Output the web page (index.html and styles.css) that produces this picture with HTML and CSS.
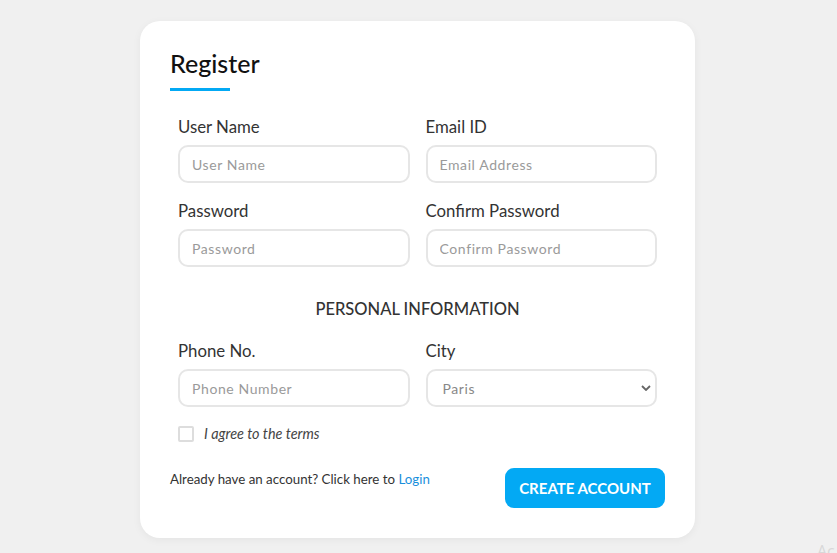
FILE: index.html
```html
<!DOCTYPE html>
<html>
<head>
<meta charset="utf-8">
<link rel="stylesheet" href="styles.css">
</head>
<body>
<div class="card">
  <h2 class="title">Register</h2>
  <div class="underline"></div>
  <div class="row first">
    <div class="col">
      <label class="label">User Name</label>
      <input class="field" type="text" placeholder="User Name">
    </div>
    <div class="col">
      <label class="label">Email ID</label>
      <input class="field" type="text" placeholder="Email Address">
    </div>
  </div>
  <div class="row">
    <div class="col">
      <label class="label">Password</label>
      <input class="field" type="password" placeholder="Password">
    </div>
    <div class="col">
      <label class="label">Confirm Password</label>
      <input class="field" type="password" placeholder="Confirm Password">
    </div>
  </div>
  <h3 class="section">PERSONAL INFORMATION</h3>
  <div class="row personal">
    <div class="col">
      <label class="label">Phone No.</label>
      <input class="field" type="text" placeholder="Phone Number">
    </div>
    <div class="col">
      <label class="label">City</label>
      <div class="select-wrap">
        <select class="field select">
          <option>Paris</option>
        </select>
        <svg class="chev" width="10" height="6" viewBox="0 0 10 6"><path d="M1 1 L5 5 L9 1" fill="none" stroke="#666" stroke-width="1.8"/></svg>
      </div>
    </div>
  </div>
  <div class="check">
    <span class="box"></span>
    <span class="check-text">I agree to the terms</span>
  </div>
  <div class="footer">
    <p class="login">Already have an account? Click here to <a class="link">Login</a></p>
    <button class="btn">CREATE ACCOUNT</button>
  </div>
</div>
<div class="watermark">Ac</div>
</body>
</html>
```
FILE: styles.css
```css
html, body { margin: 0; padding: 0; }
body {
  background: #f0f0f0;
  font-family: Lato, "Open Sans", sans-serif;
  color: #333;
  width: 837px;
  height: 553px;
  overflow: hidden;
  position: relative;
}
.card {
  box-sizing: border-box;
  width: 555px;
  margin: 21px 0 0 140px;
  padding: 26px 30px 30px;
  background: #fff;
  border-radius: 20px;
  box-shadow: 0 2px 8px rgba(0,0,0,0.05);
}
.title {
  margin: 0;
  font-size: 25px;
  line-height: 32px;
  font-weight: 500;
  color: #111;
}
.underline {
  width: 60px;
  height: 3px;
  background: #03a9f4;
  margin-top: 9px;
}
.row {
  display: flex;
  margin-top: 18px;
}
.row.first { margin-top: 26px; }
.row.personal { margin-top: 21px; }
.col {
  flex: 1;
  padding: 0 8px;
  display: flex;
  flex-direction: column;
}
.label {
  font-size: 16.8px;
  line-height: 20px;
  color: #333;
  margin-bottom: 8px;
}
.field {
  box-sizing: border-box;
  width: 100%;
  height: 38px;
  border: 2px solid #e6e6e6;
  border-radius: 10px;
  padding: 0 12px;
  font-family: Lato, "Open Sans", sans-serif;
  font-size: 14px;
  letter-spacing: 0.6px;
  color: #888;
  background: #fff;
  outline: none;
}
.field::placeholder { color: #9a9a9a; }
.select-wrap { position: relative; }
.select {
  appearance: none;
  -webkit-appearance: none;
  padding-left: 15px;
}
.chev {
  position: absolute;
  right: 6px;
  top: 16px;
}
.section {
  margin: 31px 0 0;
  text-align: center;
  font-size: 16.5px;
  line-height: 22px;
  font-weight: 500;
  color: #333;
}
.check {
  display: flex;
  align-items: center;
  margin: 18px 0 0 8px;
}
.box {
  box-sizing: border-box;
  width: 16px;
  height: 16px;
  border: 2px solid #ddd;
  border-radius: 2px;
  margin-right: 10px;
}
.check-text {
  font-size: 14.4px;
  font-style: italic;
  color: #444;
}
.footer {
  display: flex;
  justify-content: space-between;
  align-items: flex-start;
  margin-top: 26px;
}
.login {
  margin: 2px 0 0;
  font-size: 13.3px;
  line-height: 18px;
  color: #333;
}
.link { color: #1a8fdc; }
.btn {
  width: 160px;
  height: 40px;
  border: none;
  border-radius: 9px;
  background: #03a9f4;
  color: #fff;
  font-family: Lato, "Open Sans", sans-serif;
  font-weight: 700;
  font-size: 15px;
  letter-spacing: 0;
}
.watermark {
  position: absolute;
  left: 817px;
  top: 540px;
  font-size: 16px;
  color: #d8d8d8;
  font-family: "Open Sans", sans-serif;
}
```
